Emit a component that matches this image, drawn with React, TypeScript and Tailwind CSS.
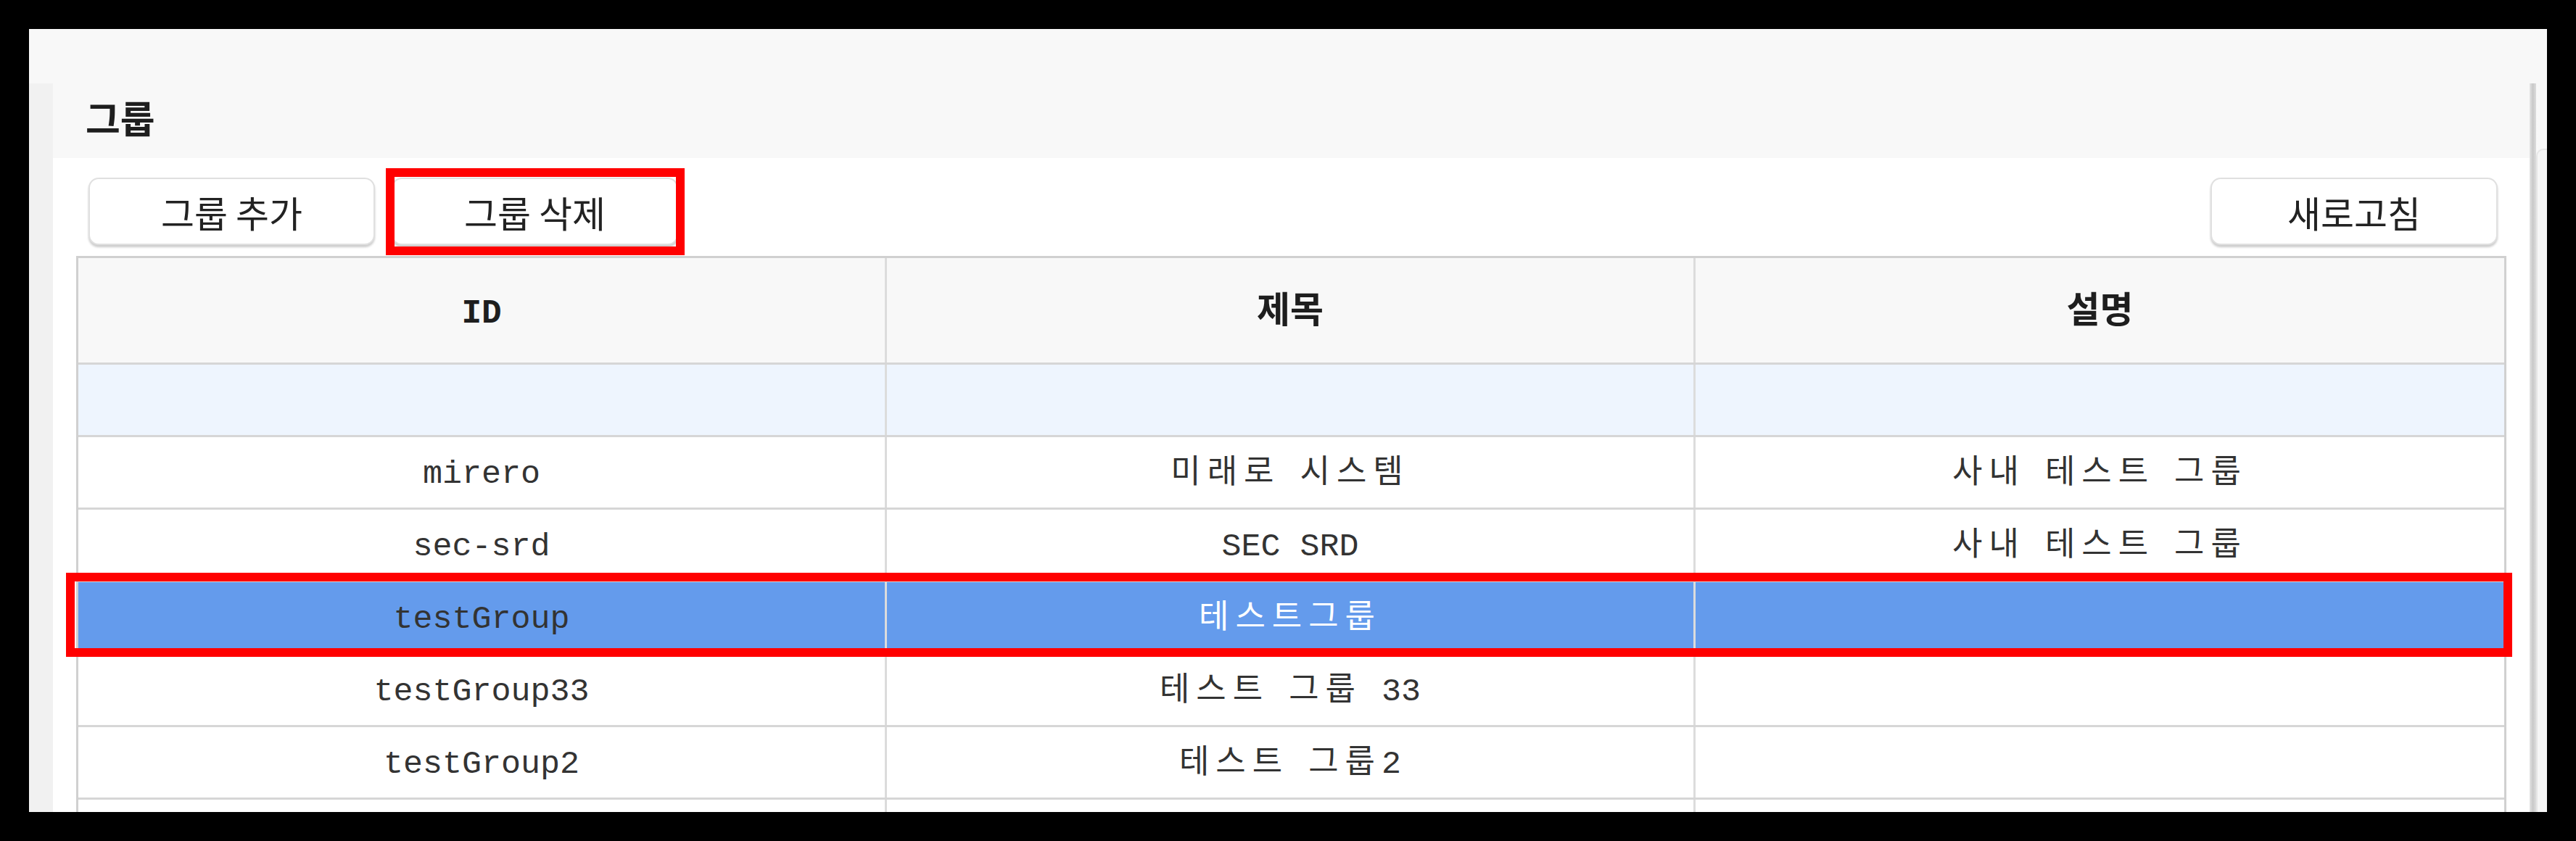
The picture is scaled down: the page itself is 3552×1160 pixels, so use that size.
import React from "react";

const HANGUL = /[\u1100-\u11FF\u3130-\u318F\uAC00-\uD7AF]/;

function splitScript(text: string) {
  const parts: { ko: boolean; t: string }[] = [];
  for (const ch of Array.from(text)) {
    const ko = HANGUL.test(ch);
    const last = parts[parts.length - 1];
    if (last && last.ko === ko) last.t += ch;
    else parts.push({ ko, t: ch });
  }
  return parts;
}

function Cell({ text, white, last }: { text: string; white?: boolean; last?: boolean }) {
  const parts = splitScript(text);
  return (
    <div
      className={
        last
          ? "flex items-center justify-center pt-[7px]"
          : "flex items-center justify-center pt-[7px] border-r-[3px] border-[#dcdcdc]"
      }
    >
      <div
        className={
          white
            ? "whitespace-pre font-['Liberation_Mono','Noto_Sans_CJK_KR',monospace] text-[45px] leading-[50px] text-white"
            : "whitespace-pre font-['Liberation_Mono','Noto_Sans_CJK_KR',monospace] text-[45px] leading-[50px] text-[#333333]"
        }
      >
        {parts.map((p, i) =>
          p.ko ? (
            <span
              key={i}
              className="font-['Noto_Sans_CJK_KR',sans-serif] text-[45px] leading-[0] tracking-[9px]"
            >
              {p.t}
            </span>
          ) : (
            <span key={i}>{p.t}</span>
          )
        )}
      </div>
    </div>
  );
}

function Btn({ children, wide }: { children: React.ReactNode; wide?: boolean }) {
  return (
    <button
      className={
        wide
          ? "w-[396px] h-[93px] flex items-center justify-center bg-white border-2 border-[#e0e0e0] rounded-[14px] shadow-[0_3px_3px_rgba(0,0,0,0.2)] font-['Noto_Sans_CJK_KR',sans-serif] text-[50px] leading-none text-[#222222]"
          : "w-[395px] h-[93px] flex items-center justify-center bg-white border-2 border-[#e0e0e0] rounded-[14px] shadow-[0_3px_3px_rgba(0,0,0,0.2)] font-['Noto_Sans_CJK_KR',sans-serif] text-[50px] leading-none text-[#222222]"
      }
    >
      {children}
    </button>
  );
}

type Row = { id: string; title: string; desc: string };

const rows: Row[] = [
  { id: "mirero", title: "미래로 시스템", desc: "사내 테스트 그룹" },
  { id: "sec-srd", title: "SEC SRD", desc: "사내 테스트 그룹" },
  { id: "testGroup", title: "테스트그룹", desc: "" },
  { id: "testGroup33", title: "테스트 그룹 33", desc: "" },
  { id: "testGroup2", title: "테스트 그룹2", desc: "" },
  { id: "", title: "", desc: "" },
];

export default function App() {
  return (
    <div className="w-[3552px] h-[1160px] bg-black p-[40px]">
      <div className="h-[1080px] bg-[#f8f8f8] flex flex-col overflow-hidden">
        <div className="h-[75px] shrink-0" />
        <div className="flex flex-1 min-h-0">
          <div className="w-[33px] shrink-0 bg-[#f1f1f1]" />
          <div className="flex-1 min-w-0 flex flex-col">
            <div className="h-[103px] shrink-0 pl-[45px] pt-[21px] bg-[#f8f8f8]">
              <h1 className="font-['Noto_Sans_CJK_KR',sans-serif] text-[52px] font-bold leading-none text-[#1e1e1e]">
                그룹
              </h1>
            </div>
            <div className="flex-1 min-h-0 bg-white px-[32px] pt-[27px] overflow-hidden">
              <div className="flex justify-between pl-[17px] pr-[12px]">
                <div className="flex gap-[23px]">
                  <Btn>그룹 추가</Btn>
                  <div className="relative">
                    <Btn>그룹 삭제</Btn>
                    <div className="absolute -left-[8px] -top-[13px] -right-[9px] -bottom-[14px] border-[12px] border-[#ff0000] pointer-events-none" />
                  </div>
                </div>
                <Btn wide>새로고침</Btn>
              </div>

              <div className="mt-[15px] border-l-[3px] border-t-[3px] border-r-[3px] border-[#d0d0d0]">
                <div className="grid grid-cols-3 h-[147px] border-b-[3px] border-[#d6d6d6] bg-[#f8f8f8]">
                  <div className="flex items-center justify-center pt-[9px] border-r-[3px] border-[#dcdcdc]">
                    <span className="font-['Liberation_Mono',monospace] text-[46px] font-bold leading-[50px] text-[#1e1e1e]">
                      ID
                    </span>
                  </div>
                  <div className="flex items-center justify-center pb-[11px] border-r-[3px] border-[#dcdcdc]">
                    <span className="font-['Noto_Sans_CJK_KR',sans-serif] text-[50px] font-bold leading-[50px] text-[#1e1e1e]">
                      제목
                    </span>
                  </div>
                  <div className="flex items-center justify-center pb-[11px]">
                    <span className="font-['Noto_Sans_CJK_KR',sans-serif] text-[50px] font-bold leading-[50px] text-[#1e1e1e]">
                      설명
                    </span>
                  </div>
                </div>

                <div className="grid grid-cols-3 h-[100px] border-b-[3px] border-[#d6d6d6] bg-[#eef5fe]">
                  <Cell text="" />
                  <Cell text="" />
                  <Cell text="" last />
                </div>

                {rows.map((r) =>
                  r.id === "testGroup" ? (
                    <div
                      key={r.id}
                      className="relative grid grid-cols-3 h-[100px] border-b-[3px] border-[#d6d6d6] bg-[#649bec]"
                    >
                      <Cell text={r.id} />
                      <Cell text={r.title} white />
                      <Cell text={r.desc} white last />
                      <div className="absolute -left-[17px] -right-[11px] -top-[13px] -bottom-[6px] border-[12px] border-[#ff0000] pointer-events-none" />
                    </div>
                  ) : (
                    <div
                      key={r.id || "blank"}
                      className="grid grid-cols-3 h-[100px] border-b-[3px] border-[#d6d6d6] bg-white"
                    >
                      <Cell text={r.id} />
                      <Cell text={r.title} />
                      <Cell text={r.desc} last />
                    </div>
                  )
                )}
              </div>
            </div>
          </div>
          <div className="w-[24px] shrink-0 flex">
            <div className="w-[9px] bg-linear-to-r from-[#e4e4e4] via-[#c9c9c9] to-[#dddddd]" />
            <div className="flex-1 pt-[90px]">
              <div className="h-full rounded-tl-[10px] border-l-2 border-t-2 border-[#e6e6e6] bg-[#f6f6f6]" />
            </div>
          </div>
        </div>
      </div>
    </div>
  );
}
